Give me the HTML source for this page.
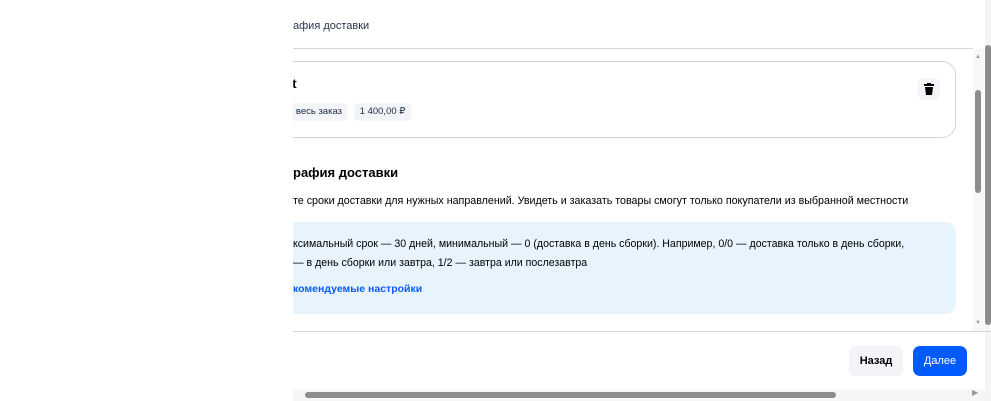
<!DOCTYPE html>
<html><head><meta charset="utf-8"><style>
body{margin:0;width:991px;height:401px;background:#fff;position:relative;overflow:hidden;font-family:"Liberation Sans","DejaVu Sans",sans-serif;color:#000}
.a{position:absolute;white-space:nowrap}
.clip{position:absolute;left:293px;top:0;width:680px;height:401px;overflow:hidden}
.pill{position:absolute;top:103px;height:18px;background:#f2f4f8;border-radius:5px;font-size:9.5px;line-height:18px;color:#1d2a44;text-align:right;box-sizing:border-box;padding-right:5px}
</style></head><body>
<div class="a" style="left:293px;top:20px;font-size:11px;color:#2a3550">афия доставки</div>
<div class="a" style="left:293px;top:48px;width:680px;height:1px;background:#d2d7de"></div>
<div class="clip">
 <div class="a" style="left:-40px;top:61px;width:701px;height:75px;border:1px solid #cdd3dc;border-radius:14px"></div>
 <div class="a" style="left:-8px;top:76px;font-size:13px;font-weight:bold">at</div>
 <div class="pill" style="left:-20px;width:74px">на весь заказ</div>
 <div class="pill" style="left:61px;width:57px;text-align:center;padding:0">1 400,00 ₽</div>
 <div class="a" style="left:0px;top:165px;font-size:13px;font-weight:bold">рафия доставки</div>
 <div class="a" style="left:0px;top:195px;font-size:10.7px">те сроки доставки для нужных направлений. Увидеть и заказать товары смогут только покупатели из выбранной местности</div>
 <div class="a" style="left:-40px;top:222px;width:703px;height:92px;background:#e8f4fd;border-radius:10px"></div>
 <div class="a" style="left:0px;top:238px;font-size:10.6px">ксимальный срок — 30 дней, минимальный — 0 (доставка в день сборки). Например, 0/0 — доставка только в день сборки,</div>
 <div class="a" style="left:0px;top:257px;font-size:10.6px">— в день сборки или завтра, 1/2 — завтра или послезавтра</div>
 <div class="a" style="left:0px;top:283px;font-size:10.5px;font-weight:bold;color:#0a5cf5">комендуемые настройки</div>
</div>
<div class="a" style="left:918px;top:78px;width:22px;height:22px;background:#f2f4f8;border-radius:6px"></div>
<svg class="a" style="left:924px;top:83px" width="10" height="12" viewBox="0 0 10 12"><rect x="0" y="1" width="10" height="2" fill="#000"/><rect x="3" y="0" width="4" height="2" fill="#000"/><path d="M1 4h8l-1 8H2z" fill="#000"/></svg>
<div class="a" style="left:973px;top:49px;width:11px;height:282px;background:#f8f8f8"></div>
<div class="a" style="left:975px;top:90px;width:6px;height:103px;background:#8d8d8d;border-radius:3px"></div>
<div class="a" style="left:975px;top:54px;font-size:6px;color:#999">▲</div>
<div class="a" style="left:975px;top:320px;font-size:6px;color:#999">▼</div>
<div class="a" style="left:985px;top:0;width:6px;height:401px;background:#f4f4f4"></div>
<div class="a" style="left:985px;top:45px;width:6px;height:280px;background:#8d8d8d;border-radius:3px"></div>
<div class="a" style="left:293px;top:331px;width:698px;height:1px;background:#d2d7de"></div>
<div class="a" style="left:849px;top:346px;width:54px;height:30px;background:#f2f4f8;border-radius:7px;font-size:11px;font-weight:bold;line-height:30px;text-align:center">Назад</div>
<div class="a" style="left:913px;top:346px;width:54px;height:30px;background:#005bff;border-radius:7px;font-size:11px;color:#fff;line-height:30px;text-align:center">Далее</div>
<div class="a" style="left:293px;top:389px;width:692px;height:12px;background:#f6f6f6"></div>
<div class="a" style="left:305px;top:392px;width:531px;height:6px;background:#8d8d8d;border-radius:3px"></div>
<div class="a" style="left:972px;top:388px;font-size:8px;color:#999">▶</div>
</body></html>
